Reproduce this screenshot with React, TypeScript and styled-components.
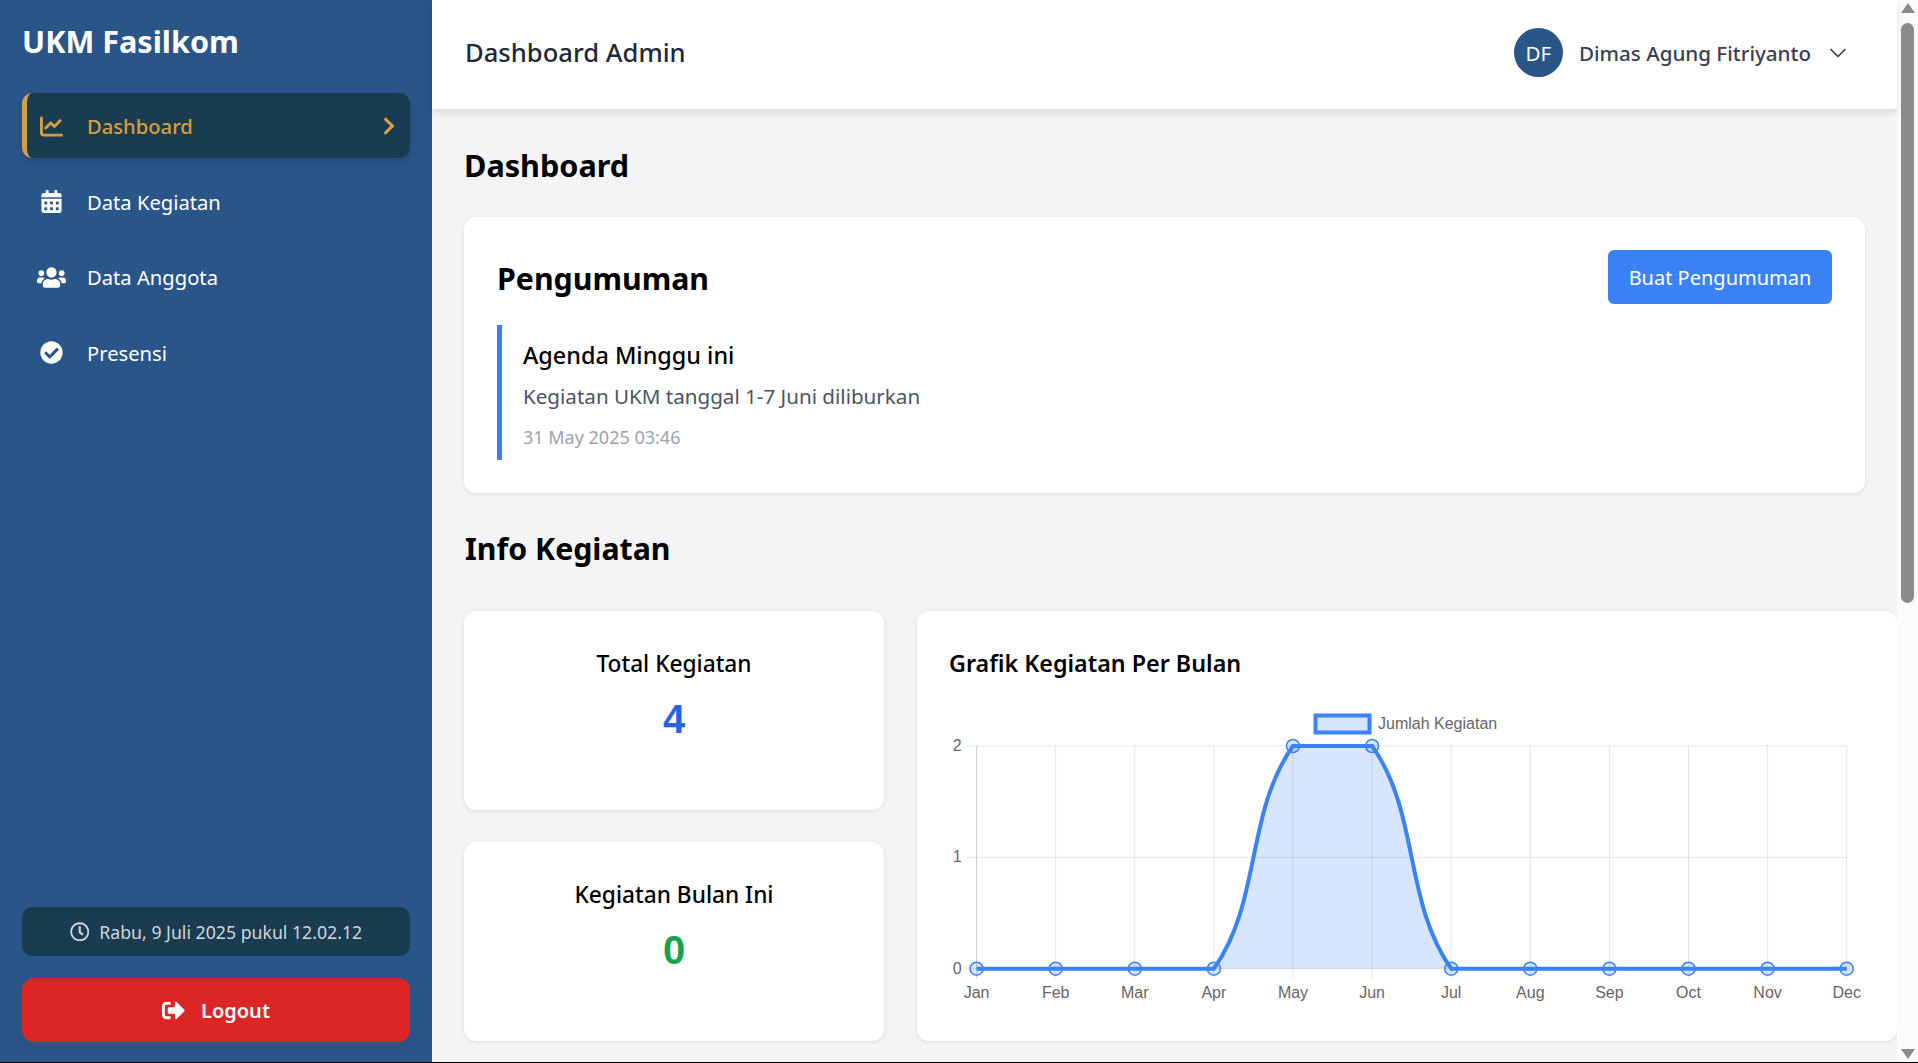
import { createGlobalStyle } from 'styled-components';
import styled from 'styled-components';
import {
  FaCalendarAlt,
  FaUsers,
  FaCheckCircle,
  FaChevronRight,
  FaSignOutAlt,
  FaRegClock,
} from 'react-icons/fa';
import { FaChartLine } from 'react-icons/fa6';
import { ChevronDown } from 'lucide-react';

const GlobalStyle = createGlobalStyle`
  html, body {
    margin: 0;
    height: 100%;
    overflow: hidden;
    background: #000;
  }
  * {
    box-sizing: border-box;
  }
  body {
    font-family: 'Noto Sans', sans-serif;
  }
`;

const Page = styled.div`
  display: flex;
  height: 1062px;
  background: #f3f4f6;
  overflow: hidden;
`;

const Sidebar = styled.aside`
  width: 432px;
  flex: none;
  display: flex;
  flex-direction: column;
  padding: 21px 22px 20px;
  background: #2a5589;
  color: #fff;
`;

const Brand = styled.h1`
  margin: 0 0 32px;
  font-size: 30.6px;
  line-height: 40px;
  font-weight: 700;
`;

const Menu = styled.nav`
  display: flex;
  flex-direction: column;
  gap: 10.6px;
`;

const MenuItem = styled.a<{ $active?: boolean }>`
  display: flex;
  align-items: center;
  height: 65px;
  padding: 1px 11px 0 ${(p) => (p.$active ? '12px' : '17px')};
  border-radius: 10px;
  border-left: ${(p) => (p.$active ? '5px solid #d69e42' : 'none')};
  background: ${(p) => (p.$active ? '#1a3c50' : 'transparent')};
  color: ${(p) => (p.$active ? '#d69e42' : '#fff')};
  font-size: 20.2px;
  font-weight: ${(p) => (p.$active ? 500 : 400)};
  box-shadow: ${(p) => (p.$active ? '0 4px 8px rgba(0,0,0,.12)' : 'none')};
`;

const MenuIcon = styled.span<{ $size?: number }>`
  display: flex;
  justify-content: center;
  width: 25px;
  margin-right: 23px;
  font-size: ${(p) => p.$size ?? 23}px;

  svg {
    flex: none;
  }
`;

const MenuArrow = styled.span`
  display: flex;
  margin-left: auto;
  font-size: 20px;
`;

const SideFooter = styled.div`
  margin-top: auto;
  display: flex;
  flex-direction: column;
  gap: 22px;
`;

const Clock = styled.div`
  display: flex;
  align-items: center;
  justify-content: center;
  gap: 10px;
  height: 49px;
  border-radius: 10px;
  background: #1a3c50;
  color: #d1d5db;
  font-size: 17.7px;

  svg {
    font-size: 19.5px;
  }
`;

const LogoutButton = styled.button`
  display: flex;
  align-items: center;
  justify-content: center;
  gap: 16px;
  height: 64px;
  border: 0;
  border-radius: 12px;
  background: #dc2626;
  color: #fff;
  font-family: inherit;
  font-size: 20px;
  font-weight: 600;

  svg {
    font-size: 23px;
  }
`;

const Main = styled.main`
  flex: 1;
  min-width: 0;
  display: flex;
  flex-direction: column;
`;

const Header = styled.header`
  position: relative;
  z-index: 1;
  flex: none;
  display: flex;
  align-items: center;
  justify-content: space-between;
  height: 109px;
  padding: 0 45px 4px 33px;
  background: #fff;
  box-shadow: 0 4px 7px rgba(0, 0, 0, 0.1);
`;

const HeaderTitle = styled.div`
  font-size: 25.6px;
  font-weight: 500;
  color: #1f2937;
`;

const UserBox = styled.div`
  display: flex;
  align-items: center;
  color: #374151;
  font-size: 20.6px;
  font-weight: 500;
`;

const Avatar = styled.div`
  display: flex;
  align-items: center;
  justify-content: center;
  width: 49px;
  height: 49px;
  margin-right: 16px;
  border-radius: 50%;
  background: #2a5589;
  color: #fff;
  font-weight: 400;
`;

const UserCaret = styled.span`
  display: flex;
  margin-left: 13px;
`;

const Content = styled.div`
  flex: 1;
  min-height: 0;
  padding: 38px 32px 0;
`;

const PageTitle = styled.h2`
  margin: 0 0 32.5px;
  font-size: 30.6px;
  line-height: 37.5px;
  font-weight: 700;
  color: #000;
`;

const SectionTitle = styled.h2`
  margin: 37px 0 43px 1px;
  font-size: 30.3px;
  line-height: 37.5px;
  font-weight: 700;
  color: #000;
`;

const Card = styled.section`
  border-radius: 12px;
  background: #fff;
  box-shadow: 0 1px 4px rgba(0, 0, 0, 0.1);
`;

const NoticeCard = styled(Card)`
  height: 276px;
  padding: 33px;
`;

const NoticeHead = styled.div`
  display: flex;
  align-items: center;
  justify-content: space-between;
  height: 54px;
  margin-bottom: 21px;
`;

const NoticeTitle = styled.h3`
  margin: 0;
  padding-top: 2px;
  font-size: 30.3px;
  font-weight: 700;
  color: #000;
`;

const PrimaryButton = styled.button`
  width: 224px;
  height: 54px;
  padding: 0;
  border: 0;
  border-radius: 6px;
  background: #3b82f6;
  color: #fff;
  font-family: inherit;
  font-size: 20px;
  font-weight: 400;
`;

const Notice = styled.article`
  height: 135px;
  padding: 13px 0 0 21px;
  border-left: 5px solid #3b82f6;
`;

const NoticeName = styled.div`
  font-size: 23.4px;
  line-height: 35px;
  font-weight: 500;
  color: #000;
`;

const NoticeBody = styled.div`
  margin-top: 8px;
  font-size: 20.6px;
  line-height: 30px;
  color: #4b5563;
`;

const NoticeDate = styled.div`
  margin-top: 13.5px;
  font-size: 18px;
  line-height: 25px;
  color: #9ca3af;
`;

const StatsGrid = styled.div`
  display: grid;
  grid-template-columns: 420px 980px;
  grid-template-rows: 199px 199px;
  gap: 32px 33px;
  width: 1433px;
`;

const StatCard = styled(Card)`
  padding-top: 35px;
  text-align: center;
`;

const CardLabel = styled.h3`
  margin: 0;
  font-size: 22.7px;
  line-height: 35px;
  font-weight: 500;
  color: #000;
`;

const StatValue = styled.div<{ $color: string }>`
  margin-top: 16px;
  font-family: 'Liberation Sans', Arial, sans-serif;
  font-size: 40px;
  line-height: 45px;
  font-weight: 700;
  color: ${(p) => p.$color};
`;

const ChartCard = styled(Card)`
  grid-column: 2;
  grid-row: 1 / span 2;
  padding: 35px 32px;
  overflow: hidden;
`;

const ChartTitle = styled.h3`
  margin: 0;
  font-size: 23.3px;
  line-height: 35px;
  font-weight: 600;
  color: #000;
`;

const ChartSvg = styled.svg`
  display: block;
  margin-top: 20px;
  font-family: 'Liberation Sans', Arial, sans-serif;
  font-size: 16px;
  fill: #666;
`;

const ScrollBar = styled.div`
  flex: none;
  display: flex;
  flex-direction: column;
  align-items: center;
  width: 21px;
  padding: 3px 0 3px;
  background: #fbfbfb;
`;

const ArrowUp = styled.span`
  border: 7.5px solid transparent;
  border-top: 0;
  border-bottom: 10px solid #8b8b8b;
`;

const ArrowDown = styled.span`
  margin-top: auto;
  border: 7.5px solid transparent;
  border-bottom: 0;
  border-top: 10px solid #8b8b8b;
`;

const Thumb = styled.span`
  width: 13px;
  height: 580px;
  margin-top: 10px;
  border-radius: 6.5px;
  background: #8b8b8b;
`;

const MONTHS = ['Jan', 'Feb', 'Mar', 'Apr', 'May', 'Jun', 'Jul', 'Aug', 'Sep', 'Oct', 'Nov', 'Dec'];
const DATA = [0, 0, 0, 0, 2, 2, 0, 0, 0, 0, 0, 0];

const X0 = 27.6;
const STEP = 79.1;
const YTOP = 45;
const YBOTTOM = 267.7;
const xAt = (i: number) => X0 + i * STEP;
const yAt = (v: number) => YBOTTOM - (v / 2) * (YBOTTOM - YTOP);

// same spline as chart.js with tension 0.4, control points capped to the plot
const buildLine = () => {
  const pts = DATA.map((v, i) => ({ x: xAt(i), y: yAt(v) }));
  const clampY = (y: number) => Math.min(YBOTTOM, Math.max(YTOP, y));
  let d = `M${pts[0].x} ${pts[0].y}`;
  const ctrl = pts.map((p, i) => {
    const prev = pts[i - 1] || p;
    const next = pts[i + 1] || p;
    const d01 = Math.hypot(p.x - prev.x, p.y - prev.y);
    const d12 = Math.hypot(next.x - p.x, next.y - p.y);
    const total = d01 + d12 || 1;
    const fa = (0.4 * d01) / total;
    const fb = (0.4 * d12) / total;
    return {
      px: p.x - fa * (next.x - prev.x),
      py: clampY(p.y - fa * (next.y - prev.y)),
      nx: p.x + fb * (next.x - prev.x),
      ny: clampY(p.y + fb * (next.y - prev.y)),
    };
  });
  for (let i = 1; i < pts.length; i++) {
    d += ` C${ctrl[i - 1].nx} ${ctrl[i - 1].ny} ${ctrl[i].px} ${ctrl[i].py} ${pts[i].x} ${pts[i].y}`;
  }
  return d;
};

const ActivityChart = () => {
  const line = buildLine();
  const area = `${line} L${xAt(11)} ${YBOTTOM} L${xAt(0)} ${YBOTTOM} Z`;
  return (
    <ChartSvg width="916" height="320" viewBox="0 0 916 320">
      {[2, 1, 0].map((v) => (
        <g key={v}>
          <line x1={X0 - 10} x2={xAt(11)} y1={yAt(v)} y2={yAt(v)} stroke="rgba(0,0,0,.1)" />
          <text x={X0 - 15} y={yAt(v) + 5} textAnchor="end">
            {v}
          </text>
        </g>
      ))}
      {MONTHS.map((m, i) => (
        <g key={m}>
          <line
            x1={xAt(i)}
            x2={xAt(i)}
            y1={YTOP}
            y2={YBOTTOM + 10}
            stroke={i === 0 ? 'rgba(0,0,0,.2)' : 'rgba(0,0,0,.1)'}
          />
          <text x={xAt(i)} y={YBOTTOM + 29} textAnchor="middle">
            {m}
          </text>
        </g>
      ))}
      <path d={area} fill="rgba(59,130,246,.2)" />
      <path d={line} fill="none" stroke="#3b82f6" strokeWidth="4" />
      {DATA.map((v, i) => (
        <circle
          key={i}
          cx={xAt(i)}
          cy={yAt(v)}
          r="6.5"
          fill="rgba(59,130,246,.2)"
          stroke="#3b82f6"
          strokeWidth="1.5"
        />
      ))}
      <rect x="366.5" y="14.5" width="54" height="17" fill="rgba(59,130,246,.2)" stroke="#3b82f6" strokeWidth="4" />
      <text x="429" y="28">
        Jumlah Kegiatan
      </text>
    </ChartSvg>
  );
};

const App = () => {
  return (
    <Page>
      <GlobalStyle />
      <Sidebar>
        <Brand>UKM Fasilkom</Brand>
        <Menu>
          <MenuItem $active>
            <MenuIcon>
              <FaChartLine />
            </MenuIcon>
            Dashboard
            <MenuArrow>
              <FaChevronRight />
            </MenuArrow>
          </MenuItem>
          <MenuItem>
            <MenuIcon>
              <FaCalendarAlt />
            </MenuIcon>
            Data Kegiatan
          </MenuItem>
          <MenuItem>
            <MenuIcon $size={29}>
              <FaUsers />
            </MenuIcon>
            Data Anggota
          </MenuItem>
          <MenuItem>
            <MenuIcon>
              <FaCheckCircle />
            </MenuIcon>
            Presensi
          </MenuItem>
        </Menu>
        <SideFooter>
          <Clock>
            <FaRegClock />
            Rabu, 9 Juli 2025 pukul 12.02.12
          </Clock>
          <LogoutButton>
            <FaSignOutAlt />
            Logout
          </LogoutButton>
        </SideFooter>
      </Sidebar>
      <Main>
        <Header>
          <HeaderTitle>Dashboard Admin</HeaderTitle>
          <UserBox>
            <Avatar>DF</Avatar>
            Dimas Agung Fitriyanto
            <UserCaret>
              <ChevronDown size={28} strokeWidth={1.5} />
            </UserCaret>
          </UserBox>
        </Header>
        <Content>
          <PageTitle>Dashboard</PageTitle>
          <NoticeCard>
            <NoticeHead>
              <NoticeTitle>Pengumuman</NoticeTitle>
              <PrimaryButton>Buat Pengumuman</PrimaryButton>
            </NoticeHead>
            <Notice>
              <NoticeName>Agenda Minggu ini</NoticeName>
              <NoticeBody>Kegiatan UKM tanggal 1-7 Juni diliburkan</NoticeBody>
              <NoticeDate>31 May 2025 03:46</NoticeDate>
            </Notice>
          </NoticeCard>
          <SectionTitle>Info Kegiatan</SectionTitle>
          <StatsGrid>
            <StatCard>
              <CardLabel>Total Kegiatan</CardLabel>
              <StatValue $color="#2563eb">4</StatValue>
            </StatCard>
            <ChartCard>
              <ChartTitle>Grafik Kegiatan Per Bulan</ChartTitle>
              <ActivityChart />
            </ChartCard>
            <StatCard>
              <CardLabel>Kegiatan Bulan Ini</CardLabel>
              <StatValue $color="#16a34a">0</StatValue>
            </StatCard>
          </StatsGrid>
        </Content>
      </Main>
      <ScrollBar>
        <ArrowUp />
        <Thumb />
        <ArrowDown />
      </ScrollBar>
    </Page>
  );
};

export default App;
